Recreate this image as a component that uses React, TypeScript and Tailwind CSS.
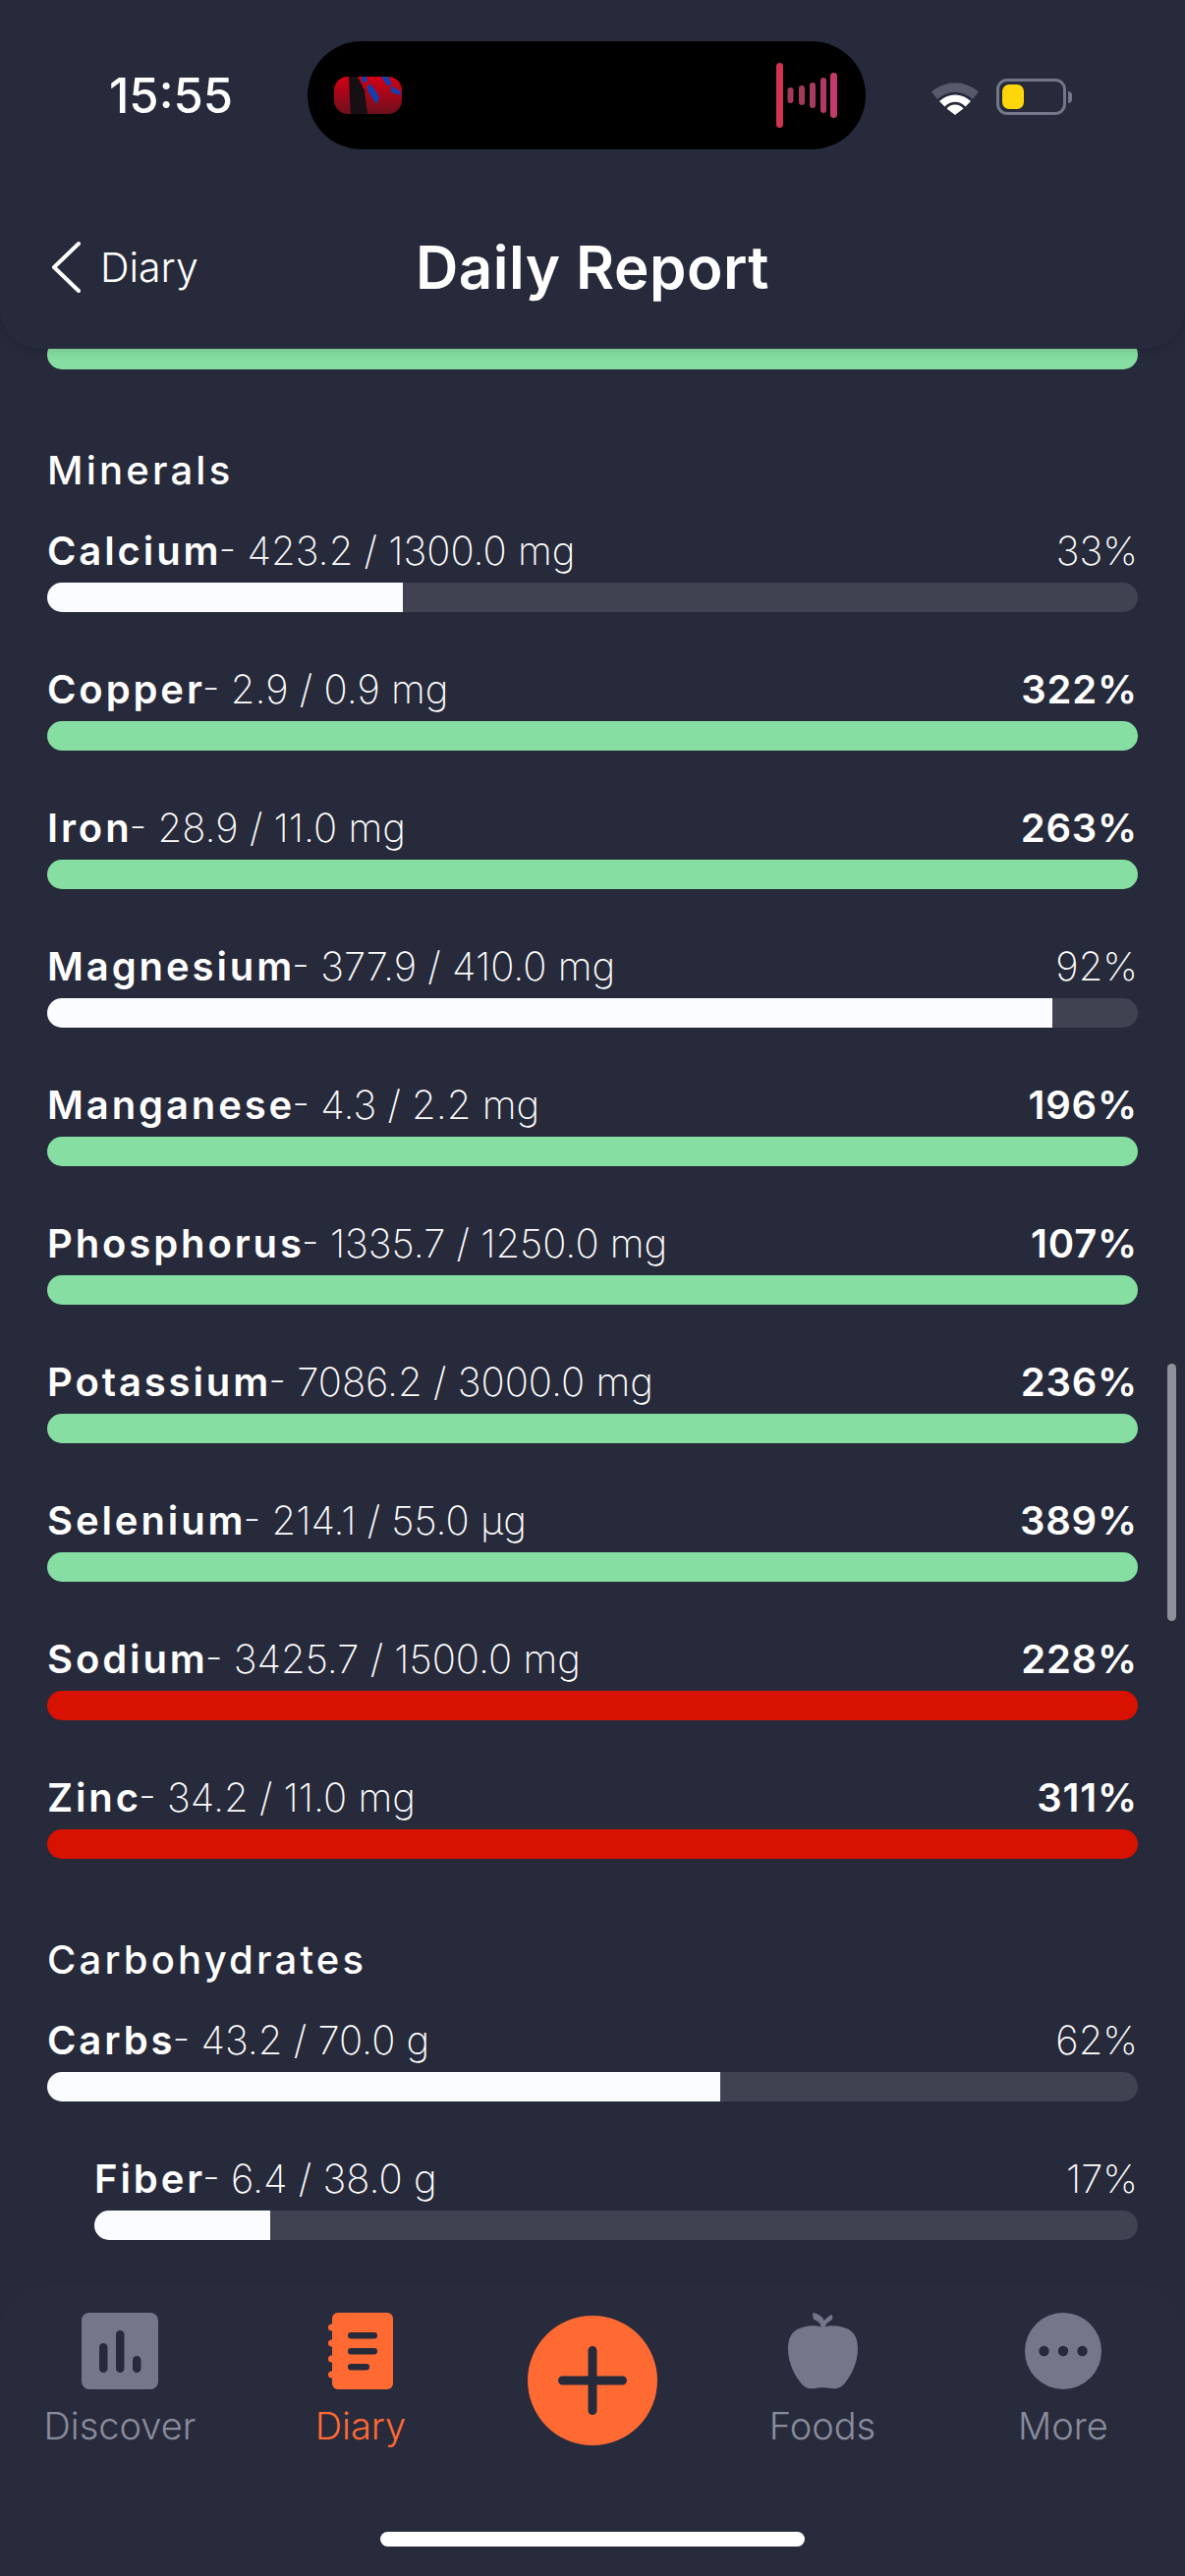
type Row = { name: string; detail: string; pct: number; bar: number; tone: 'plain' | 'good' | 'bad'; indent?: boolean };

const minerals: Row[] = [
    { name: 'Calcium', detail: '423.2 / 1300.0 mg', pct: 33, bar: 32.6, tone: 'plain' },
    { name: 'Copper', detail: '2.9 / 0.9 mg', pct: 322, bar: 100, tone: 'good' },
    { name: 'Iron', detail: '28.9 / 11.0 mg', pct: 263, bar: 100, tone: 'good' },
    { name: 'Magnesium', detail: '377.9 / 410.0 mg', pct: 92, bar: 92.2, tone: 'plain' },
    { name: 'Manganese', detail: '4.3 / 2.2 mg', pct: 196, bar: 100, tone: 'good' },
    { name: 'Phosphorus', detail: '1335.7 / 1250.0 mg', pct: 107, bar: 100, tone: 'good' },
    { name: 'Potassium', detail: '7086.2 / 3000.0 mg', pct: 236, bar: 100, tone: 'good' },
    { name: 'Selenium', detail: '214.1 / 55.0 µg', pct: 389, bar: 100, tone: 'good' },
    { name: 'Sodium', detail: '3425.7 / 1500.0 mg', pct: 228, bar: 100, tone: 'bad' },
    { name: 'Zinc', detail: '34.2 / 11.0 mg', pct: 311, bar: 100, tone: 'bad' },
];

const carbs: Row[] = [
    { name: 'Carbs', detail: '43.2 / 70.0 g', pct: 62, bar: 61.7, tone: 'plain' },
    { name: 'Fiber', detail: '6.4 / 38.0 g', pct: 17, bar: 16.85, tone: 'plain', indent: true },
];

const NutrientRow = ({ row }: { row: Row }) => {
    const fill = row.tone === 'good' ? 'bg-[#86dea2]' : row.tone === 'bad' ? 'bg-[#d81200]' : 'bg-[#fbfcff]';
    return (
        <div className={`h-[141px] ${row.indent ? 'pl-[48px]' : ''}`}>
            <div className="flex h-[52px] items-center justify-between text-[40px] leading-[52px] text-white">
                <div className="whitespace-nowrap">
                    <span className="font-semibold tracking-[2.9px]">{row.name}</span>
                    <span className="-ml-[3px] font-[250]">- {row.detail}</span>
                </div>
                <span className={row.pct > 100 ? 'font-semibold tracking-[0.8px]' : 'font-[250]'}>{row.pct}%</span>
            </div>
            <div className="mt-[6px] h-[30px] overflow-hidden rounded-full bg-[#404252]">
                <div className={`h-full ${fill}`} style={{ width: `${row.bar}%` }} />
            </div>
        </div>
    );
};

const Section = ({ title, rows }: { title: string; rows: Row[] }) => (
    <section>
        <h2 className="mb-[30px] h-[52px] text-[40px] leading-[52px] font-medium tracking-[3.2px] text-white">{title}</h2>
        {rows.map((row) => (
            <NutrientRow key={row.name} row={row} />
        ))}
    </section>
);

const StatusBar = () => (
    <div className="flex h-[153px] items-start pt-[42px]">
        <span className="ml-[111px] mt-[30px] w-[202px] text-[49px] leading-[52px] font-medium text-white">15:55</span>
        <div className="flex h-[110px] w-[568px] items-center justify-between rounded-full bg-black pr-[29px] pl-[27px]">
            <svg width="69" height="38" viewBox="0 0 69 38">
                <defs>
                    <linearGradient id="cover" x1="0" y1="0" x2="0" y2="1">
                        <stop offset="0" stopColor="#d40016" />
                        <stop offset="1" stopColor="#6e0f1c" />
                    </linearGradient>
                </defs>
                <rect width="69" height="38" rx="14" fill="url(#cover)" />
                <path d="M15 0h9l7 14 3 24H17l-1-14z" fill="#161014" />
                <path d="M34 10l3-3 9 14-3 7-9-14zM28 0h5l1 5-5 1zM48 0h7l4 8-5 1zM58 9l9 6 1 4-10-3z" fill="#1240b0" />
            </svg>
            <svg width="62" height="66" viewBox="0 0 62 66">
                <rect x="0" y="0" width="7" height="66" rx="3.500" fill="#cf3553" />
                <rect x="11.500" y="25" width="6" height="16" rx="3" fill="#a8385a" />
                <rect x="23" y="23" width="6" height="20" rx="3" fill="#a8385a" />
                <rect x="34" y="20" width="6" height="26" rx="3" fill="#aa3a60" />
                <rect x="45" y="15" width="6" height="36" rx="3" fill="#b03a64" />
                <rect x="55" y="10" width="7" height="46" rx="3.500" fill="#c43a6c" />
            </svg>
        </div>
        <div className="mt-[38px] ml-[66px] flex items-center gap-[17px]">
            <svg width="50" height="36" viewBox="0 0 48 36">
                <path d="M0 12.5A36 36 0 0 1 48 12.5L42 20A26 26 0 0 0 6 20Z" fill="#565a6a" />
                <path d="M8 22A23 23 0 0 1 40 22L34.5 27.5A14 14 0 0 0 13.5 27.5Z" fill="#fff" />
                <path d="M15.5 29.5A11 11 0 0 1 32.500 29.5L24 36Z" fill="#fff" />
            </svg>
            <div className="flex items-center gap-[2px]">
                <div className="h-[37px] w-[71px] rounded-[11px] border-[3px] border-[#74768a] p-[3px]">
                    <div className="h-full w-[22px] rounded-[7px] bg-[#ffd60a]" />
                </div>
                <div className="h-[12px] w-[4px] rounded-r-full bg-[#74768a]" />
            </div>
        </div>
    </div>
);

const Header = () => (
    <header className="relative z-10 h-[355px] rounded-b-[40px] bg-[#272a3b] shadow-[0_3px_10px_rgba(0,0,0,0.12)]">
        <StatusBar />
        <div className="mt-[48px] grid h-[142px] grid-cols-[1fr_auto_1fr] items-center text-white">
            <div className="flex items-center gap-[20px] pl-[52px]">
                <svg width="30" height="52" viewBox="0 0 30 52" fill="none">
                    <path d="M28 2L3 26L28 50" stroke="#fff" strokeWidth="4" strokeLinecap="round" strokeLinejoin="round" />
                </svg>
                <span className="text-[41px] leading-[56px] font-light">Diary</span>
            </div>
            <h1 className="text-[60px] leading-[70px] font-semibold tracking-[0.5px]">Daily Report</h1>
            <div />
        </div>
    </header>
);

const DiscoverIcon = () => (
    <svg width="78" height="78" viewBox="0 0 78 78">
        <rect width="78" height="78" rx="8" fill="#74768a" />
        <rect x="18" y="31" width="8.500" height="30" rx="4.250" fill="#272a3b" />
        <rect x="35" y="18" width="8.500" height="43" rx="4.250" fill="#272a3b" />
        <rect x="52" y="44" width="8.500" height="17" rx="4.250" fill="#272a3b" />
    </svg>
);

const DiaryIcon = () => (
    <svg width="66" height="78" viewBox="0 0 66 78">
        <rect x="4" y="0" width="62" height="78" rx="6" fill="#ff6a33" />
        <circle cx="3.500" cy="15" r="3.500" fill="#ff6a33" />
        <circle cx="3.500" cy="31" r="3.500" fill="#ff6a33" />
        <circle cx="3.500" cy="47" r="3.500" fill="#ff6a33" />
        <circle cx="3.500" cy="63" r="3.500" fill="#ff6a33" />
        <rect x="20" y="20" width="30" height="6.500" rx="3.250" fill="#272a3b" />
        <rect x="20" y="36" width="30" height="6.500" rx="3.250" fill="#272a3b" />
        <rect x="20" y="52" width="22" height="6.500" rx="3.250" fill="#272a3b" />
    </svg>
);

const AppleIcon = () => (
    <svg width="71" height="78" viewBox="0 0 62 78" preserveAspectRatio="none">
        <path d="M31 15C24 12 15 13 8 17C2 21 0 28 0 37C0 50 5 62 11 71C15 77 19 78 24 77C28 76 34 76 38 77C43 78 47 77 51 71C57 62 62 50 62 37C62 28 60 21 54 17C47 13 38 12 31 15Z" fill="#74768a" />
        <path d="M29.500 16C29.500 12 28 9 23 7C22 4 22 2 22 0C27 1 31 4 32 8C34 6 36 3 39 2C40 5 40 6 38 8C35 10 33 12 33 16Z" fill="#74768a" />
    </svg>
);

const MoreIcon = () => (
    <svg width="78" height="78" viewBox="0 0 78 78">
        <circle cx="39" cy="39" r="39" fill="#74768a" />
        <circle cx="19.500" cy="39" r="5.200" fill="#272a3b" />
        <circle cx="39" cy="39" r="5.200" fill="#272a3b" />
        <circle cx="58.500" cy="39" r="5.200" fill="#272a3b" />
    </svg>
);

const TabItem = ({ label, active, icon }: { label: string; active?: boolean; icon: React.ReactNode }) => (
    <div className="flex flex-col items-center">
        <div className="h-[78px]">{icon}</div>
        <span className={`mt-[15px] text-[38px] leading-[44px] font-light ${active ? 'text-[#ff6a33]' : 'text-[#8a8c9c]'}`}>{label}</span>
    </div>
);

const TabBar = () => (
    <nav className="relative z-10 flex h-[297px] flex-col rounded-t-[48px] bg-[#282b3c]">
        <div className="grid h-[252px] grid-cols-[244px_246px_226px_242px_248px] items-start pt-[29px]">
            <TabItem label="Discover" icon={<DiscoverIcon />} />
            <TabItem label="Diary" active icon={<DiaryIcon />} />
            <button className="mx-auto mt-[3px] flex h-[132px] w-[132px] items-center justify-center rounded-full bg-[#ff6a33]">
                <svg width="70" height="70" viewBox="0 0 70 70">
                    <path d="M4.500 35H65.500M35 4.500V65.500" stroke="#272a3b" strokeWidth="9" strokeLinecap="round" />
                </svg>
            </button>
            <TabItem label="Foods" icon={<AppleIcon />} />
            <TabItem label="More" icon={<MoreIcon />} />
        </div>
        <div className="mx-auto h-[15px] w-[432px] rounded-full bg-white" />
    </nav>
);

export default function App() {
    return (
        <div className="flex h-[2622px] w-[1206px] flex-col overflow-hidden bg-[#272a3b] font-['Inter',sans-serif]">
            <Header />
            <main className="relative min-h-0 flex-1 overflow-hidden px-[48px]">
                <div className="-mt-[9px] h-[30px] rounded-full bg-[#86dea2]" />
                <div className="mt-[77px]">
                    <Section title="Minerals" rows={minerals} />
                </div>
                <div className="mt-[24px]">
                    <Section title="Carbohydrates" rows={carbs} />
                </div>
                <div className="absolute top-[1033px] right-[9px] h-[262px] w-[9px] rounded-full bg-[#8f919a]" />
            </main>
            <TabBar />
        </div>
    );
}
